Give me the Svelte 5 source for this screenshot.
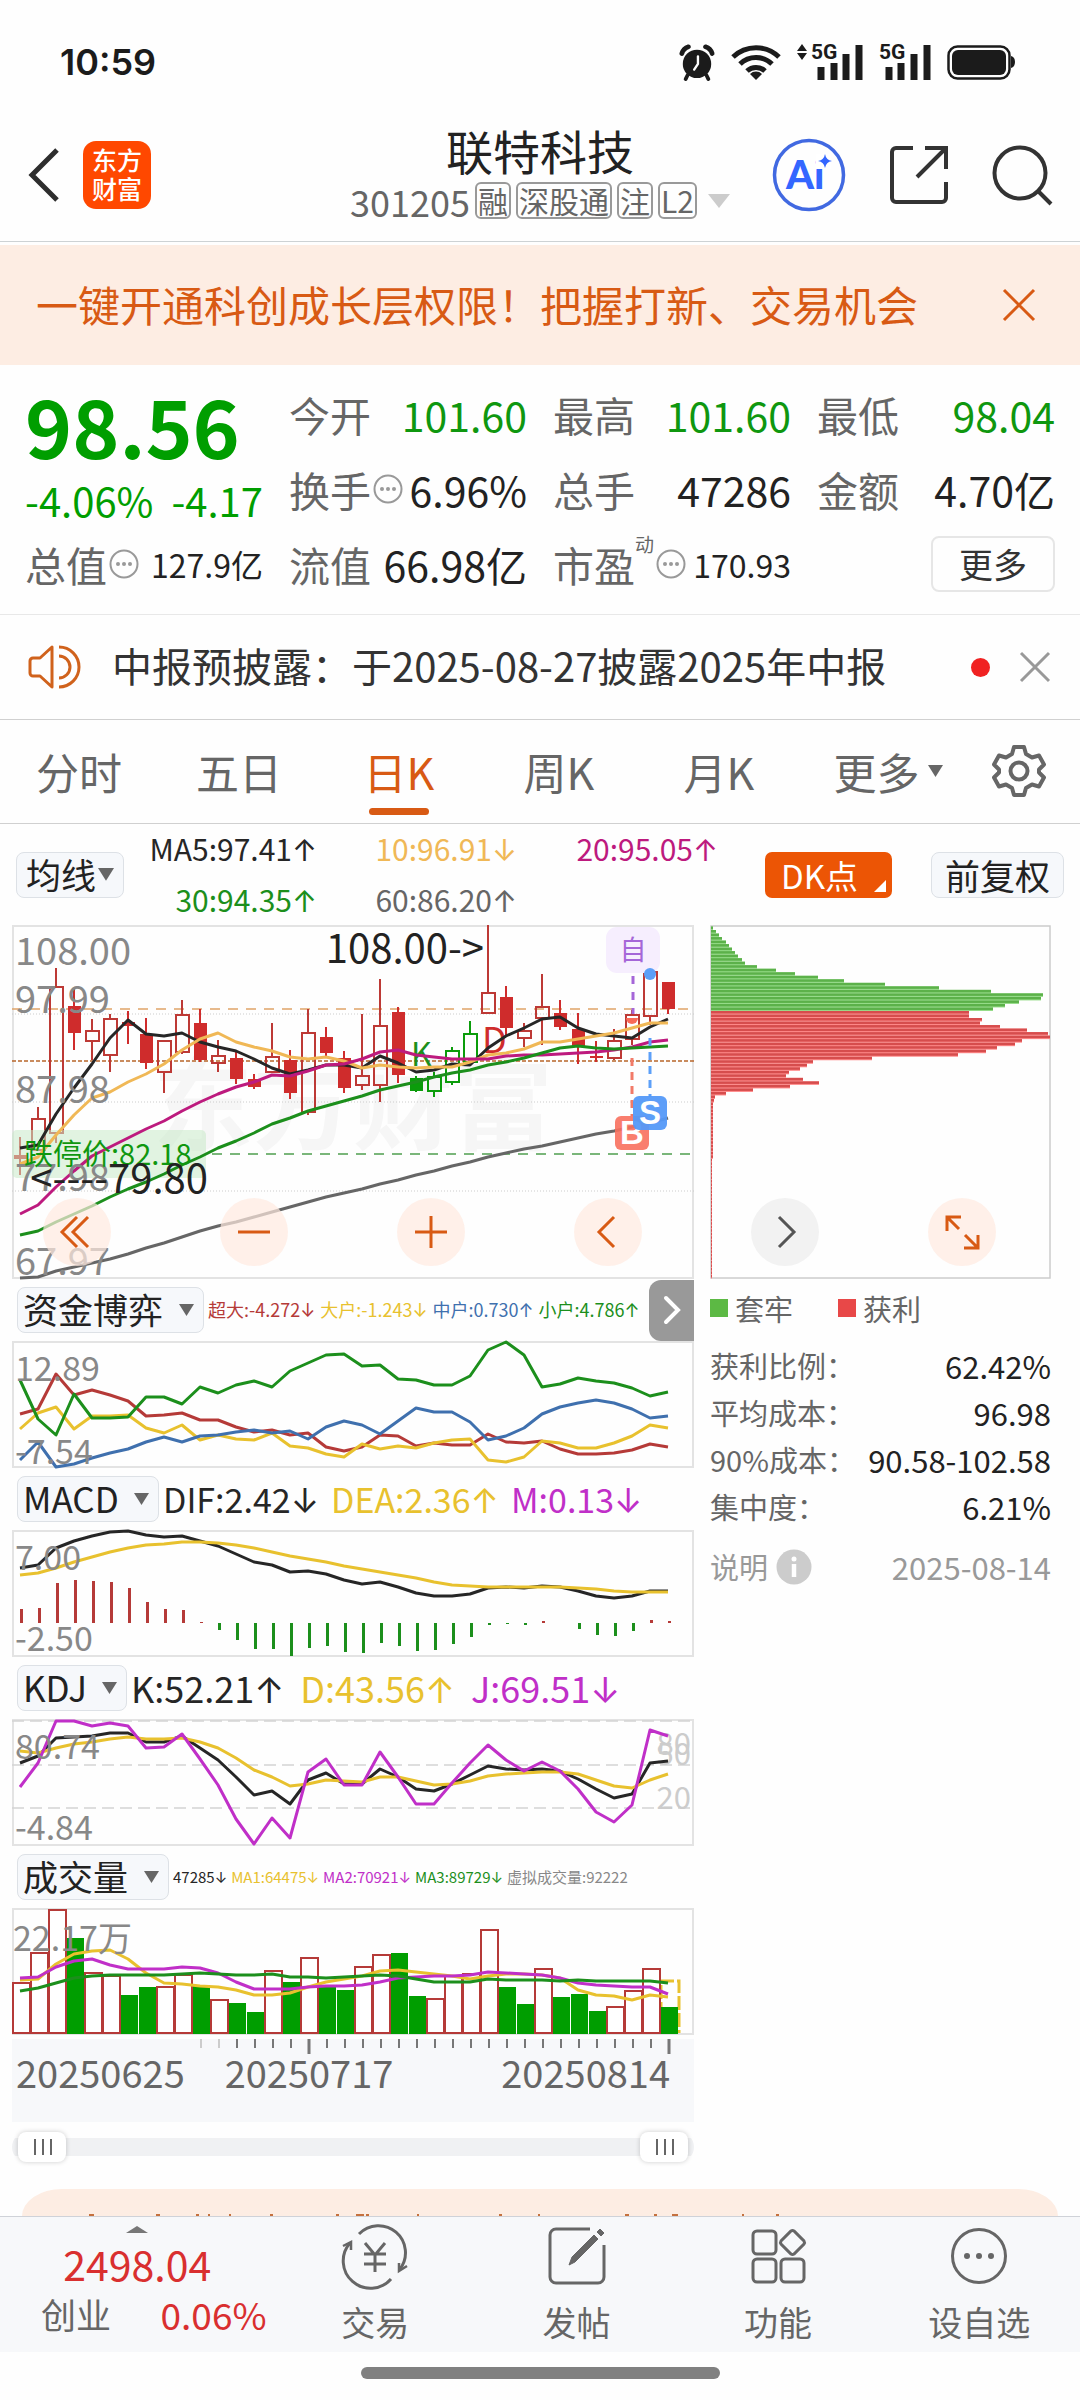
<script lang="ts">
	const STEP = 18;
	const FIRST = 8;

	const red = '#b53a38';
	const green = '#1c8f1c';
	const yellow = '#e8c12e';
	const purple = '#c02fc8';

	// [high, body top, body bottom, low, kind] — lower case is hollow, upper case is filled
	const candles: [number, number, number, number, string][] = [
		[212, 230, 234, 250, 'R'], [182, 194, 225, 225, 'r'], [43, 62, 208, 218, 'r'], [64, 81, 108, 125, 'R'],
		[94, 106, 116, 135, 'r'], [89, 94, 130, 147, 'r'], [86, 97, 101, 119, 'R'], [93, 109, 138, 144, 'R'],
		[115, 116, 147, 168, 'r'], [75, 90, 127, 129, 'r'], [84, 98, 135, 137, 'R'], [115, 131, 138, 147, 'r'],
		[126, 133, 154, 159, 'R'], [149, 154, 162, 164, 'R'], [98, 132, 147, 148, 'r'], [125, 135, 168, 174, 'R'],
		[84, 108, 187, 190, 'r'], [102, 112, 128, 132, 'R'], [126, 133, 163, 168, 'R'], [89, 151, 160, 165, 'r'],
		[54, 101, 160, 177, 'r'], [82, 87, 150, 158, 'R'], [151, 153, 166, 167, 'G'], [147, 152, 166, 172, 'g'],
		[122, 126, 157, 160, 'g'], [96, 109, 137, 140, 'g'], [0, 68, 88, 88, 'r'], [61, 72, 103, 112, 'R'],
		[98, 106, 113, 122, 'r'], [49, 82, 93, 120, 'r'], [75, 88, 102, 105, 'R'], [88, 104, 121, 139, 'R'],
		[116, 131, 133, 137, 'R'], [104, 116, 133, 135, 'r'], [85, 90, 114, 120, 'r'], [40, 47, 91, 100, 'r'],
		[57, 57, 84, 89, 'R']
	];

	const averages = [
		{ color: '#262626', data: [223, 220, 189, 163, 139, 113, 95, 109, 111, 108, 117, 122, 126, 134, 143, 149, 145, 140, 140, 143, 131, 138, 147, 145, 139, 140, 123, 111, 103, 94, 92, 103, 109, 111, 113, 102, 94] },
		{ color: '#f0b856', data: [239, 232, 210, 190, 173, 167, 157, 149, 139, 125, 114, 108, 117, 122, 126, 132, 134, 132, 136, 143, 140, 142, 143, 142, 142, 137, 130, 128, 124, 117, 117, 114, 111, 108, 103, 98, 98] },
		{ color: '#bd1a7e', data: [289, 280, 262, 246, 231, 222, 213, 204, 196, 186, 177, 169, 162, 157, 150, 151, 146, 140, 139, 134, 127, 125, 130, 132, 134, 134, 134, 131, 130, 130, 129, 128, 127, 125, 122, 117, 115] },
		{ color: green, data: [310, 306, 297, 289, 281, 272, 264, 257, 249, 240, 232, 223, 216, 208, 199, 193, 186, 181, 176, 171, 165, 161, 157, 152, 148, 145, 140, 137, 133, 128, 123, 121, 123, 124, 123, 122, 121] },
		{ color: '#666', data: [353, 352, 346, 342, 338, 334, 329, 323, 318, 312, 306, 301, 297, 292, 287, 282, 277, 272, 268, 264, 259, 255, 250, 246, 241, 237, 232, 228, 224, 221, 217, 213, 209, 206, 202, 198, 193] }
	];

	const priceTicks = [
		{ text: '108.00', y: 40 },
		{ text: '97.99', y: 88 },
		{ text: '87.98', y: 178 },
		{ text: '77.98', y: 266 },
		{ text: '67.97', y: 350 }
	];

	const fund = [
		{ color: red, data: [73, 68, 33, 54, 49, 54, 60, 75, 74, 72, 79, 79, 86, 91, 89, 94, 92, 106, 110, 106, 94, 95, 105, 102, 104, 104, 93, 101, 102, 100, 108, 113, 113, 112, 109, 103, 106] },
		{ color: yellow, data: [88, 72, 66, 88, 75, 75, 74, 87, 92, 84, 99, 94, 98, 99, 92, 105, 107, 113, 116, 103, 108, 105, 107, 102, 99, 98, 119, 121, 116, 100, 102, 107, 107, 102, 95, 84, 87] },
		{ color: '#3f70ae', data: [119, 101, 126, 123, 117, 112, 108, 101, 96, 101, 95, 94, 91, 89, 92, 90, 98, 86, 80, 84, 93, 80, 67, 71, 71, 81, 99, 95, 87, 73, 66, 62, 59, 62, 68, 77, 75] },
		{ color: green, data: [39, 78, 94, 53, 77, 77, 76, 56, 56, 63, 46, 52, 44, 40, 46, 30, 22, 14, 13, 25, 24, 38, 39, 44, 44, 35, 9, 1, 14, 46, 43, 37, 40, 42, 47, 55, 51] }
	];

	const macd = [
		{ color: '#262626', data: [38, 35, 18, 11, 6, 2, 1, 5, 7, 6, 11, 16, 24, 32, 35, 42, 41, 44, 50, 54, 52, 57, 63, 66, 66, 64, 58, 57, 58, 56, 57, 61, 66, 68, 66, 61, 61] },
		{ color: yellow, data: [45, 43, 38, 32, 27, 22, 18, 15, 14, 12, 12, 13, 15, 18, 22, 26, 29, 32, 36, 39, 42, 45, 48, 52, 55, 56, 57, 57, 57, 57, 57, 58, 59, 61, 62, 62, 62] }
	];
	const macdBars = [14, 15, 40, 43, 42, 41, 35, 21, 14, 13, 1, -7, -17, -26, -26, -33, -25, -23, -29, -30, -20, -23, -28, -27, -21, -14, -2, -1, -2, 2, 0, -6, -12, -13, -8, 3, 2];

	const kdj = [
		{ color: '#262626', data: [44, 37, 19, 18, 17, 14, 14, 23, 23, 17, 29, 41, 58, 76, 72, 85, 61, 54, 65, 65, 50, 58, 70, 72, 65, 56, 47, 50, 51, 50, 52, 60, 70, 79, 75, 44, 42] },
		{ color: yellow, data: [32, 34, 29, 25, 23, 20, 18, 20, 20, 19, 23, 29, 39, 51, 58, 67, 65, 61, 62, 63, 58, 58, 62, 66, 65, 62, 57, 55, 54, 53, 53, 55, 61, 67, 69, 61, 55] },
		{ color: purple, data: [68, 44, 2, 2, 7, 4, 7, 29, 28, 15, 40, 66, 100, 125, 99, 119, 53, 40, 66, 66, 33, 58, 85, 85, 64, 44, 26, 41, 52, 43, 52, 70, 93, 103, 86, 11, 17] }
	];

	const volumeTops = [75, 45, 2, 30, 65, 68, 87, 79, 79, 67, 78, 92, 95, 104, 63, 74, 50, 78, 82, 59, 47, 45, 88, 91, 68, 66, 22, 79, 96, 61, 89, 86, 103, 99, 83, 61, 99];
	const volumeUp = [0, 1, 2, 4, 5, 8, 9, 11, 14, 16, 19, 20, 23, 24, 25, 26, 29, 33, 34, 35];
	const volume = [
		{ color: yellow, data: [72, 71, 56, 46, 43, 42, 51, 65, 75, 76, 78, 79, 82, 87, 87, 85, 79, 74, 71, 68, 63, 62, 64, 66, 68, 71, 68, 66, 66, 67, 70, 82, 87, 88, 92, 87, 89] },
		{ color: purple, data: [70, 69, 59, 53, 51, 57, 61, 61, 61, 59, 60, 65, 74, 81, 81, 81, 79, 78, 78, 77, 74, 70, 69, 68, 68, 67, 64, 65, 66, 67, 70, 75, 77, 78, 79, 79, 86] },
		{ color: green, data: [83, 80, 75, 70, 68, 67, 67, 67, 67, 66, 65, 66, 67, 67, 66, 69, 69, 70, 69, 68, 67, 68, 71, 74, 74, 74, 71, 72, 72, 72, 73, 72, 73, 73, 73, 73, 75] }
	];

	const trapped = [2, 5, 8, 11, 15, 18, 21, 24, 27, 31, 34, 46, 65, 84, 107, 133, 174, 228, 280, 332, 330, 308, 294, 282];
	const profit = [258, 258, 271, 269, 289, 316, 337, 339, 311, 304, 286, 275, 247, 161, 102, 96, 89, 78, 75, 92, 108, 79, 42, 15, 4, 3];
	const chips = [
		...trapped.map((w) => ({ w, up: false })),
		...profit.map((w) => ({ w, up: true })),
		...Array.from({ length: 50 }, (_, i) => ({ w: i < 16 ? 2 : 1, up: true }))
	];

	const ticks = Array.from({ length: 27 }, (_, i) => i + 10);

	const tabs = ['分时', '五日', '日K', '周K', '月K'];
	let activeTab = $state('日K');
	let rangeStart = $state(0);
	let rangeEnd = $state(100);

	const tags = ['融', '深股通', '注', 'L2'];

	const maValues = [
		{ text: 'MA5:97.41', dir: '↑', color: '#262626' },
		{ text: '10:96.91', dir: '↓', color: '#f0b856' },
		{ text: '20:95.05', dir: '↑', color: '#bd1a7e' },
		{ text: '30:94.35', dir: '↑', color: green },
		{ text: '60:86.20', dir: '↑', color: '#666' }
	];

	const fundValues = [
		{ text: '超大:-4.272', dir: '↓', color: red },
		{ text: '大户:-1.243', dir: '↓', color: yellow },
		{ text: '中户:0.730', dir: '↑', color: '#3f70ae' },
		{ text: '小户:4.786', dir: '↑', color: green }
	];
	const macdValues = [
		{ text: 'DIF:2.42', dir: '↓', color: '#262626' },
		{ text: 'DEA:2.36', dir: '↑', color: yellow },
		{ text: 'M:0.13', dir: '↓', color: purple }
	];
	const kdjValues = [
		{ text: 'K:52.21', dir: '↑', color: '#262626' },
		{ text: 'D:43.56', dir: '↑', color: yellow },
		{ text: 'J:69.51', dir: '↓', color: purple }
	];
	const volumeValues = [
		{ text: '47285', dir: '↓', color: '#262626' },
		{ text: 'MA1:64475', dir: '↓', color: yellow },
		{ text: 'MA2:70921', dir: '↓', color: purple },
		{ text: 'MA3:89729', dir: '↓', color: green },
		{ text: '虚拟成交量:92222', dir: '', color: '#888' }
	];

	const costRows = [
		{ label: '获利比例：', value: '62.42%' },
		{ label: '平均成本：', value: '96.98' },
		{ label: '90%成本：', value: '90.58-102.58' },
		{ label: '集中度：', value: '6.21%' }
	];

	function toPoints(data: number[]) {
		return data.map((y, i) => `${FIRST + STEP * i},${y}`).join(' ');
	}
</script>

{#snippet more()}
	<svg class="info" viewBox="0 0 30 30" aria-hidden="true">
		<circle cx="15" cy="15" r="13.5" fill="none" stroke="#999" stroke-width="2" />
		<g fill="#999"><circle cx="9" cy="15" r="2" /><circle cx="15" cy="15" r="2" /><circle cx="21" cy="15" r="2" /></g>
	</svg>
{/snippet}

{#snippet caret()}
	<svg class="caret" viewBox="0 0 15 12" aria-hidden="true"><path d="M0 0h15L7.500 12z" fill="#666" /></svg>
{/snippet}

{#snippet picker(name)}
	<span class="picker">
		<select aria-label={name}><option>{name}</option></select>
		{@render caret()}
	</span>
{/snippet}

{#snippet values(list, size)}
	<div class="values {size}">
		{#each list as v}
			<span style:color={v.color}>{v.text}<i>{v.dir}</i></span>
		{/each}
	</div>
{/snippet}

{#snippet lines(list)}
	{#each list as line}
		<polyline points={toPoints(line.data)} fill="none" stroke={line.color} stroke-width="3" stroke-linejoin="round" />
	{/each}
{/snippet}

<div class="page">
	<div class="status">
		<span class="time">10:59</span>
		<div class="status-icons">
			<svg width="36" height="38" viewBox="0 0 38 38">
				<circle cx="19" cy="21" r="15" fill="#1b1b1b" />
				<path d="M3 10a11 11 0 0 1 7-7M35 10a11 11 0 0 0-7-7" fill="none" stroke="#1b1b1b" stroke-width="5" stroke-linecap="round" />
				<path d="M9 33l-2 4M29 33l2 4" stroke="#1b1b1b" stroke-width="4" stroke-linecap="round" />
				<path d="M20 13v8l-4 6" fill="none" stroke="#fff" stroke-width="2.500" stroke-linecap="round" />
			</svg>
			<svg width="50" height="38" viewBox="0 0 50 38">
				<path d="M2 14a33 33 0 0 1 46 0M9 21a23 23 0 0 1 32 0M16 28a13 13 0 0 1 18 0" fill="none" stroke="#1b1b1b" stroke-width="5" />
				<path d="M25 37l-6-6a8.500 8.500 0 0 1 12 0z" fill="#1b1b1b" />
			</svg>
			<svg width="66" height="38" viewBox="0 0 66 38">
				<path d="M0 8l5-7 5 7zM0 10l5 7 5-7z" fill="#1b1b1b" />
				<text x="14" y="16" class="net">5G</text>
				<path d="M24 37V24M37 37V20M49 37V11M62 37V2" stroke="#1b1b1b" stroke-width="7" />
			</svg>
			<svg width="52" height="38" viewBox="0 0 52 38">
				<text x="0" y="16" class="net">5G</text>
				<path d="M10 37V24M22 37V20M35 37V11M48 37V2" stroke="#1b1b1b" stroke-width="7" />
			</svg>
			<svg width="68" height="38" viewBox="0 0 68 38">
				<rect x="1.500" y="3.500" width="61" height="32" rx="9" fill="none" stroke="#1b1b1b" stroke-width="2.500" />
				<rect x="5" y="7" width="54" height="25" rx="6" fill="#1b1b1b" />
				<path d="M64 13q4 1 4 6t-4 6z" fill="#1b1b1b" />
			</svg>
		</div>
	</div>

	<header>
		<div class="side">
			<button aria-label="返回">
				<svg width="32" height="56" viewBox="0 0 32 56"><path d="M29 3L4 28l25 25" fill="none" stroke="#2e2e2e" stroke-width="5" /></svg>
			</button>
			<a href="#home" class="logo">东方<br />财富</a>
		</div>
		<div class="name">
			<h1>联特科技</h1>
			<div class="code">
				<span>301205</span>
				{#each tags as tag}
					<span class="tag">{tag}</span>
				{/each}
				<svg width="22" height="14" viewBox="0 0 22 14"><path d="M0 0h22L11 14z" fill="#ccc" /></svg>
			</div>
		</div>
		<div class="side actions">
			<button aria-label="Ai">
				<svg width="74" height="74" viewBox="0 0 74 74">
					<circle cx="37" cy="37" r="34.500" fill="none" stroke="#4169e1" stroke-width="3.500" />
					<text x="14" y="51" class="ai">Ai</text>
					<path d="M44 16h15v15H44z" fill="#fff" />
					<path d="M53 16q1 6 7 7q-6 1-7 7q-1-6-7-7q6-1 7-7z" fill="#3366ff" />
				</svg>
			</button>
			<button aria-label="分享">
				<svg width="60" height="60" viewBox="0 0 60 60"><path d="M24 3H7a4 4 0 0 0-4 4v46a4 4 0 0 0 4 4h46a4 4 0 0 0 4-4V37M36 3h21v21M57 3L28 32" fill="none" stroke="#333" stroke-width="4" /></svg>
			</button>
			<button aria-label="搜索">
				<svg width="60" height="60" viewBox="0 0 60 60"><circle cx="28" cy="28" r="25.500" fill="none" stroke="#333" stroke-width="4" /><path d="M46 46l13 13" stroke="#333" stroke-width="4" /></svg>
			</button>
		</div>
	</header>

	<div class="banner">
		<a href="#open">一键开通科创成长层权限！把握打新、交易机会</a>
		<button aria-label="关闭">
			<svg width="34" height="34" viewBox="0 0 34 34"><path d="M2 2l30 30M32 2L2 32" stroke="#d85a14" stroke-width="3" /></svg>
		</button>
	</div>

	<section class="quote">
		<div class="price">
			<strong>98.56</strong>
			<div class="change"><span>-4.06%</span><span>-4.17</span></div>
		</div>
		<div class="stat"><span>今开</span><b class="down">101.60</b></div>
		<div class="stat"><span>最高</span><b class="down">101.60</b></div>
		<div class="stat"><span>最低</span><b class="down">98.04</b></div>
		<div class="stat"><span>换手{@render more()}</span><b>6.96%</b></div>
		<div class="stat"><span>总手</span><b>47286</b></div>
		<div class="stat"><span>金额</span><b>4.70亿</b></div>
		<div class="stat"><span>总值{@render more()}</span><b class="small">127.9亿</b></div>
		<div class="stat"><span>流值</span><b>66.98亿</b></div>
		<div class="stat"><span>市盈<sup>动</sup>{@render more()}</span><b class="small">170.93</b></div>
		<div class="stat"><button class="more">更多</button></div>
	</section>

	<div class="notice">
		<svg width="54" height="46" viewBox="0 0 54 46" fill="none" stroke="#d0621c" stroke-width="3">
			<path d="M24 3v40L12 32H5a3 3 0 0 1-3-3V17a3 3 0 0 1 3-3h7z" stroke-linejoin="round" />
			<path d="M31 12a11 11 0 0 1 0 22M31 3a20 20 0 0 1 0 40" />
		</svg>
		<a href="#notice">中报预披露：于2025-08-27披露2025年中报</a>
		<span class="dot"></span>
		<button aria-label="关闭">
			<svg width="30" height="30" viewBox="0 0 30 30"><path d="M1 1l28 28M29 1L1 29" stroke="#999" stroke-width="3" /></svg>
		</button>
	</div>

	<nav class="tabs">
		{#each tabs as tab}
			<button class:active={activeTab === tab} onclick={() => (activeTab = tab)}>{tab}</button>
		{/each}
		<button class="others">更多{@render caret()}</button>
		<button aria-label="设置">
			<svg width="54" height="54" viewBox="0 0 54 54" fill="none" stroke="#666" stroke-width="4" stroke-linejoin="round">
				<path d="M22 3h10l2 7 6 3.500 7-2 5 9-5 5v3l5 5-5 9-7-2-6 3.500-2 7H22l-2-7-6-3.500-7 2-5-9 5-5v-3l-5-5 5-9 7 2 6-3.500z" />
				<circle cx="27" cy="27" r="8.500" />
			</svg>
		</button>
	</nav>

	<div class="toolbar">
		<span class="picker tight">
			<select aria-label="均线"><option>均线</option></select>
			{@render caret()}
		</span>
		<div class="ma">
			{#each maValues as v}
				<span style:color={v.color}>{v.text}<i>{v.dir}</i></span>
			{/each}
		</div>
		<button class="dk">DK点</button>
		<button class="adjust">前复权</button>
	</div>

	<div class="board">
		<div class="charts">
			<div class="chart">
				<svg viewBox="0 0 682 354">
					<text x="141" y="217" class="watermark">东方财富</text>
					<rect x="1" y="1" width="680" height="352" class="frame" />
					<path d="M0 89h682M0 177h682M0 266h682" stroke="#ccc" stroke-dasharray="1 2" />
					<path d="M0 84h682" stroke="#dfa468" stroke-width="1.500" stroke-dasharray="10 8" />
					<path d="M0 136h682" stroke="#b8662a" stroke-width="1.500" stroke-dasharray="4 2" />
					<path d="M200 229h482" stroke="#4f9f4f" stroke-width="1.500" stroke-dasharray="10 8" />
					{#each candles as [high, top, bottom, low, kind], i}
						{@const x = FIRST + STEP * i}
						{@const filled = kind === kind.toUpperCase()}
						{@const color = kind.toLowerCase() === 'g' ? '#0b9c0b' : filled ? '#cf2c2c' : '#bd3935'}
						<path d="M{x} {high}V{top}M{x} {bottom}V{low}" stroke={color} stroke-width="2" />
						<rect x={x - 6} y={top} width="13" height={bottom - top} fill={filled ? color : 'none'} stroke={color} stroke-width={filled ? 0 : 2} />
					{/each}
					<text x="399" y="141" class="mark-k">K</text>
					<text x="470" y="128" class="mark-d">D</text>
					<rect x="0" y="205" width="194" height="48" rx="5" fill="#c8eac8" fill-opacity=".55" />
					{@render lines(averages)}
					{#each priceTicks as t}
						<text x="3" y={t.y} class="axis big">{t.text}</text>
					{/each}
					<text x="12" y="240" class="limit">跌停价:82.18</text>
					<text x="196" y="268" class="peak" text-anchor="end">&lt;----79.80</text>
					<text x="472" y="38" class="peak" text-anchor="end">108.00-&gt;</text>
					<rect x="594" y="2" width="54" height="46" rx="11" fill="#f6eefe" />
					<text x="621" y="35" class="self" text-anchor="middle">自</text>
					<path d="M621 51v38" stroke="#a566d8" stroke-width="3" stroke-dasharray="8 8" />
					<path d="M614 93h12a6 6 0 0 1-12 0z" fill="#f86a58" />
					<circle cx="638" cy="49" r="6" fill="#5c9ff8" />
					<path d="M620 133v58" stroke="#f27a68" stroke-width="3" stroke-dasharray="8 6" />
					<path d="M638 113v59" stroke="#5c9ff8" stroke-width="3" stroke-dasharray="8 6" />
					<rect x="603" y="191" width="34" height="34" rx="6" fill="#f8705e" fill-opacity=".9" />
					<text x="620" y="219" class="flag" text-anchor="middle">B</text>
					<rect x="621" y="171" width="34" height="34" rx="6" fill="#5499f8" fill-opacity=".95" />
					<text x="638" y="199" class="flag" text-anchor="middle">S</text>
				</svg>
				<div class="controls">
					<button aria-label="最早"><svg viewBox="0 0 68 68"><path d="M34 19L19 34l15 15M45 19L30 34l15 15" /></svg></button>
					<button aria-label="缩小"><svg viewBox="0 0 68 68"><path d="M18 34h32" /></svg></button>
					<button aria-label="放大"><svg viewBox="0 0 68 68"><path d="M18 34h32M34 18v32" /></svg></button>
					<button aria-label="向左"><svg viewBox="0 0 68 68"><path d="M40 19L25 34l15 15" /></svg></button>
				</div>
			</div>

			<div class="head">
				{@render picker('资金博弈')}
				{@render values(fundValues, 'xs')}
				<button class="expand" aria-label="展开"><svg width="18" height="28" viewBox="0 0 18 28"><path d="M3 2l12 12L3 26" fill="none" stroke="#fff" stroke-width="4" stroke-linecap="round" /></svg></button>
			</div>
			<svg viewBox="0 0 682 127">
				<rect x="1" y="1" width="680" height="125" class="frame" />
				{@render lines(fund)}
				<text x="3" y="40" class="axis">12.89</text>
				<text x="3" y="123" class="axis">-7.54</text>
			</svg>

			<div class="head">
				{@render picker('MACD')}
				{@render values(macdValues, 'md')}
			</div>
			<svg viewBox="0 0 682 127">
				<rect x="1" y="1" width="680" height="125" class="frame" />
				{#each macdBars as h, i}
					<rect x={FIRST + STEP * i} y={h > 0 ? 93 - h : 93} width="3" height={Math.abs(h)} fill={h > 0 ? red : green} />
				{/each}
				{@render lines(macd)}
				<text x="3" y="40" class="axis">7.00</text>
				<text x="3" y="121" class="axis">-2.50</text>
			</svg>

			<div class="head">
				{@render picker('KDJ')}
				{@render values(kdjValues, 'lg')}
			</div>
			<svg viewBox="0 0 682 127">
				<rect x="1" y="1" width="680" height="125" class="frame" />
				<path d="M0 2h682M0 46h682M0 89h682" stroke="#d4d4d4" stroke-width="1.500" stroke-dasharray="12 6" />
				<text x="679" y="36" class="level" text-anchor="end">80</text>
				<text x="679" y="46" class="level" text-anchor="end">50</text>
				<text x="679" y="90" class="level" text-anchor="end">20</text>
				{@render lines(kdj)}
				<text x="3" y="40" class="axis">80.74</text>
				<text x="3" y="121" class="axis">-4.84</text>
			</svg>

			<div class="head">
				{@render picker('成交量')}
				{@render values(volumeValues, 'xxs')}
			</div>
			<svg viewBox="0 0 682 127">
				<rect x="1" y="1" width="680" height="125" class="frame" />
				<path d="M649 125V73h18v52" fill="none" stroke={yellow} stroke-width="3" stroke-dasharray="14 3" />
				{#each volumeTops as top, i}
					{#if volumeUp.includes(i)}
						<rect x={STEP * i + 1} y={top} width="17" height={125 - top} fill="#fff" stroke={red} stroke-width="2" />
					{:else}
						<rect x={STEP * i + 1} y={top} width="17" height={126 - top} fill="#009e00" />
					{/if}
				{/each}
				{@render lines(volume)}
				<text x="1" y="43" class="axis">22.17万</text>
			</svg>

			<svg class="dates" viewBox="0 0 682 83">
				{#each ticks as t}
					<path d="M{FIRST + STEP * t + 1} 0v{t === 16 || t === 36 ? 15 : 9}" stroke={t < 12 ? '#ccc' : '#777'} stroke-width={t === 16 || t === 36 ? 3 : 2} />
				{/each}
				<text x="4" y="49">20250625</text>
				<text x="297" y="49" text-anchor="middle">20250717</text>
				<text x="658" y="49" text-anchor="end">20250814</text>
			</svg>

			<div class="range">
				<input type="range" aria-label="起始日期" bind:value={rangeStart} />
				<input type="range" aria-label="结束日期" bind:value={rangeEnd} />
			</div>
		</div>

		<aside>
			<div class="chart">
				<svg viewBox="0 0 341 354">
					<rect x="1" y="1" width="339" height="352" fill="none" stroke="#ccc" stroke-width="1.500" />
					{#each chips as chip, i}
						<rect x="1" y={1.5 + 3.52 * i} width={chip.w} height="3.520" fill={chip.up ? '#ff8a8a' : '#95dc88'} />
						<rect x="1" y={1.5 + 3.52 * i} width={chip.w} height="2.500" fill={chip.up ? '#d64d4d' : '#5cb14a'} />
					{/each}
				</svg>
				<div class="controls chip-controls">
					<button class="gray" aria-label="向右"><svg viewBox="0 0 68 68"><path d="M28 19l15 15-15 15" /></svg></button>
					<button aria-label="全屏"><svg viewBox="0 0 68 68"><path d="M19 33V19h14M19 19l12 12M50 37v13H36M49 49L37 37" stroke-width="4" /></svg></button>
				</div>
			</div>
			<div class="legend">
				<span><i class="trapped"></i>套牢</span>
				<span><i class="profit"></i>获利</span>
			</div>
			{#each costRows as row}
				<div class="cost"><span>{row.label}</span><b>{row.value}</b></div>
			{/each}
			<div class="explain">
				<a href="#explain">说明
					<svg width="36" height="36" viewBox="0 0 36 36"><circle cx="18" cy="18" r="17.500" fill="#ccc" /><circle cx="18" cy="10" r="2.500" fill="#fff" /><path d="M18 15v13" stroke="#fff" stroke-width="4.500" /></svg>
				</a>
				<time>2025-08-14</time>
			</div>
		</aside>
	</div>

	<div class="card">
		<svg viewBox="0 0 720 2" aria-hidden="true"><path d="M0 1h5M67 1h4M107 1h3M119 1h2M140 1h2M181 1h3M247 1h3M267 1h8M277 1h3M328 1h2M410 1h3M449 1h2M536 1h4M565 1h3M583 1h6M653 1h2M687 1h3" stroke="#c5713e" stroke-width="2" /></svg>
	</div>

	<footer>
		<a href="#index" class="index">
			<svg width="22" height="7" viewBox="0 0 22 7"><path d="M0 7h22L11 0z" fill="#777" /></svg>
			<b>2498.04</b>
			<span class="index-row"><span>创业</span><em>0.06%</em></span>
		</a>
		<a href="#trade">
			<svg width="66" height="60" viewBox="0 0 66 60" fill="none" stroke="#666" stroke-width="3">
				<path d="M17 8a27 27 0 0 1 41 35M49 53A27 27 0 0 1 8 17" />
				<path d="M1 20l8-4v8M65 40l-8 5v-8" stroke-width="2.500" />
				<path d="M23 17l10 12 10-12M22 28h22M22 38h22M33 28v18" />
			</svg>
			交易
		</a>
		<a href="#post">
			<svg width="60" height="60" viewBox="0 0 60 60" fill="none" stroke="#666" stroke-width="3">
				<path d="M43 3H9a6 6 0 0 0-6 6v42a6 6 0 0 0 6 6h42a6 6 0 0 0 6-6V19" />
				<path d="M22 39l3-8L47 9l4 4-23 23zM50 6l3-3 4 4-3 3z" fill="#666" stroke-width="1" />
			</svg>
			发帖
		</a>
		<a href="#features">
			<svg width="58" height="60" viewBox="0 0 58 60" fill="none" stroke="#666" stroke-width="3">
				<rect x="4" y="5" width="23" height="23" rx="4" />
				<rect x="4" y="33" width="23" height="23" rx="4" />
				<rect x="32" y="33" width="23" height="23" rx="4" />
				<path d="M42 5q1.500-1 3 0l10 10q1 1.500 0 3L45 28q-1.500 1-3 0L32 18q-1-1.500 0-3z" />
			</svg>
			功能
		</a>
		<a href="#watchlist">
			<svg width="60" height="60" viewBox="0 0 60 60">
				<circle cx="30" cy="30" r="26.500" fill="none" stroke="#666" stroke-width="3" />
				<g fill="#666"><circle cx="18" cy="30" r="3" /><circle cx="30" cy="30" r="3" /><circle cx="42" cy="30" r="3" /></g>
			</svg>
			设自选
		</a>
	</footer>
	<div class="home"></div>
</div>

<style>
	:global(body) {
		background: #fefefe;
	}

	.page {
		font-family: 'Noto Sans CJK SC', 'Noto Sans', sans-serif;
		color: #333;
		white-space: nowrap;
		overflow: hidden;
	}

	svg {
		display: block;
		flex-shrink: 0;
		overflow: visible;
	}

	button,
	select {
		font: inherit;
		color: inherit;
		background: none;
		border: 0;
		padding: 0;
	}

	a {
		color: inherit;
		text-decoration: none;
	}

	b,
	i,
	em {
		font-weight: 400;
		font-style: normal;
	}

	/* Status bar */
	.status {
		display: flex;
		justify-content: space-between;
		align-items: center;
		height: 124px;
		padding: 0 65px 0 60px;
		box-sizing: border-box;
	}

	.time {
		font-family: Inter, sans-serif;
		font-size: 36px;
		font-weight: 600;
		color: #1b1b1b;
	}

	.status-icons {
		display: flex;
		gap: 16px;
	}

	.net {
		font: 700 21px Roboto, sans-serif;
		fill: #1b1b1b;
	}

	/* Header */
	header {
		display: grid;
		grid-template-columns: 1fr auto 1fr;
		align-items: center;
		height: 117px;
		padding: 0 28px;
		border-bottom: 1px solid #cdd2d4;
	}

	.side {
		display: flex;
		align-items: center;
		gap: 23px;
		padding-bottom: 16px;
	}

	.actions {
		justify-content: flex-end;
		gap: 43px;
	}

	.logo {
		width: 68px;
		padding: 4px 0 6px;
		border-radius: 13px;
		background: #ff4800;
		color: #fff;
		font-size: 25px;
		font-weight: 500;
		line-height: 29px;
		text-align: center;
	}

	.ai {
		font: 900 40px Lato, sans-serif;
		fill: #3366ff;
	}

	.name {
		padding-bottom: 14px;
	}

	h1 {
		margin: 0;
		font-size: 47px;
		font-weight: 400;
		line-height: 50px;
		text-align: center;
		color: #222;
	}

	.code {
		display: flex;
		align-items: center;
		gap: 5px;
		font-size: 36px;
		line-height: 52px;
		color: #666;
	}

	.tag {
		padding: 0 1px;
		border: 2px solid #999;
		border-radius: 6px;
		font-size: 30px;
		line-height: 33px;
	}

	.code svg {
		margin-left: 6px;
	}

	/* Banner */
	.banner {
		display: flex;
		justify-content: space-between;
		align-items: center;
		height: 120px;
		margin-top: 3px;
		padding: 0 44px 0 36px;
		background: #fdede3;
		color: #d85a14;
		font-size: 42px;
	}

	.banner a,
	.notice a {
		padding-bottom: 4px;
	}

	/* Quote */
	.quote {
		display: grid;
		grid-template-columns: repeat(4, minmax(0, 1fr));
		grid-auto-rows: 75px;
		column-gap: 26px;
		padding: 11px 25px 13px;
		border-bottom: 1px solid #e8e8e8;
	}

	.price {
		grid-row: span 2;
		color: #009e00;
	}

	.price strong {
		display: block;
		font-size: 80px;
		font-weight: 700;
		line-height: 96px;
	}

	.change {
		display: flex;
		justify-content: space-between;
		font-size: 40px;
		line-height: 56px;
	}

	.stat {
		display: flex;
		justify-content: space-between;
		align-items: center;
		font-size: 41px;
	}

	.stat span {
		display: flex;
		align-items: center;
		color: #666;
	}

	.stat b {
		color: #222;
	}

	.stat b.down {
		color: #0f970f;
	}

	.stat b.small {
		font-size: 32px;
	}

	.stat sup {
		align-self: flex-start;
		font-size: 19px;
		line-height: 20px;
	}

	.info {
		width: 30px;
		margin-left: 2px;
	}

	.more {
		margin-left: auto;
		width: 124px;
		border: 2px solid #e6e6e6;
		border-radius: 8px;
		font-size: 34px;
		line-height: 52px;
	}

	/* Notice */
	.notice {
		display: flex;
		align-items: center;
		height: 104px;
		padding: 0 30px 0 28px;
		border-bottom: 1px solid #d0d0d0;
		font-size: 40px;
	}

	.notice a {
		margin-left: 30px;
	}

	.dot {
		width: 19px;
		height: 19px;
		margin: 0 30px 0 auto;
		border-radius: 50%;
		background: #f02222;
	}

	/* Tabs */
	.tabs {
		display: grid;
		grid-template-columns: repeat(6, 4fr) 3fr;
		height: 103px;
		border-bottom: 1px solid #d0d0d0;
		color: #666;
		font-size: 43px;
	}

	.tabs button {
		position: relative;
		display: flex;
		justify-content: center;
		align-items: center;
		gap: 8px;
		padding: 0 2px 2px 0;
	}

	.tabs .others {
		padding-left: 18px;
	}

	.tabs .active {
		color: #d85a14;
	}

	.tabs .active::after {
		content: '';
		position: absolute;
		bottom: 8px;
		width: 60px;
		height: 7px;
		border-radius: 4px;
		background: #d85a14;
	}

	.caret {
		width: 15px;
	}

	/* Toolbar */
	.toolbar {
		display: flex;
		align-items: center;
		height: 101px;
		padding: 0 16px;
	}

	.picker {
		position: relative;
		display: flex;
		align-items: center;
		border: 1px solid #dde1e6;
		border-radius: 8px;
		background: #f6f8fb;
	}

	.picker select {
		appearance: none;
		height: 44px;
		padding: 0 39px 2px 5px;
		font-size: 35px;
		line-height: 42px;
		color: #222;
	}

	.picker .caret {
		position: absolute;
		right: 9px;
		pointer-events: none;
	}

	.picker.tight select {
		padding: 0 26px 2px 9px;
	}

	.tight .caret {
		width: 16px;
	}

	.ma {
		display: grid;
		grid-template-columns: 193px 200px 201px;
		font-size: 30px;
		line-height: 49px;
		text-align: right;
	}

	.ma i,
	.values i {
		font-family: Inter, sans-serif;
	}

	.dk {
		position: relative;
		margin-left: auto;
		padding: 0 34px 0 16px;
		border-radius: 7px;
		background: #ec5505;
		color: #fff;
		font-size: 33px;
		line-height: 46px;
	}

	.dk::after {
		content: '';
		position: absolute;
		right: 6px;
		bottom: 6px;
		border: 6px solid #fff;
		border-top-color: transparent;
		border-left-color: transparent;
	}

	.adjust {
		margin-left: 39px;
		padding: 0 13px;
		border: 1px solid #dde1e6;
		border-radius: 8px;
		background: #f6f8fb;
		color: #222;
		font-size: 35px;
		line-height: 44px;
	}

	/* Charts */
	.board {
		display: grid;
		grid-template-columns: minmax(0, 2fr) minmax(0, 1fr);
		column-gap: 16px;
		padding: 0 29px 0 12px;
	}

	.charts > svg,
	.chart > svg {
		width: 100%;
		height: auto;
	}

	.chart {
		position: relative;
	}

	.frame {
		fill: none;
		stroke: #e3e3e3;
		stroke-width: 2;
	}

	.watermark {
		font-size: 100px;
		font-weight: 700;
		fill: #f6f6f6;
	}

	.axis {
		font-size: 34px;
		fill: #888;
	}

	.axis.big {
		font-size: 38px;
	}

	.peak {
		font-size: 40px;
		fill: #222;
	}

	.limit {
		font-size: 29px;
		fill: #0f970f;
	}

	.level {
		font-size: 31px;
		fill: #ccc;
	}

	.mark-k {
		font-size: 32px;
		fill: #1c8f1c;
	}

	.mark-d {
		font-size: 36px;
		fill: #cf2c2c;
	}

	.self {
		font-size: 27px;
		fill: #a566d8;
	}

	.flag {
		font: 700 33px 'Liberation Sans', sans-serif;
		fill: #fff;
	}

	.controls {
		position: absolute;
		left: 0;
		right: 0;
		bottom: 13px;
		display: flex;
		justify-content: space-between;
		padding: 0 52px 0 31px;
	}

	.controls button {
		width: 68px;
		border-radius: 50%;
		background: rgba(255, 234, 223, 0.7);
		color: #d85a14;
	}

	.controls path {
		fill: none;
		stroke: currentColor;
		stroke-width: 3;
	}

	.controls .gray {
		background: #f2f2f2;
		color: #555;
	}

	.chip-controls {
		justify-content: flex-start;
		gap: 109px;
		padding: 0 0 0 41px;
	}

	.head {
		display: flex;
		align-items: center;
		height: 62px;
		padding-left: 5px;
	}

	.values {
		display: flex;
		margin-left: 4px;
		padding-bottom: 2px;
	}

	.xxs {
		gap: 4px;
		font-size: 15px;
	}

	.xs {
		gap: 5px;
		font-size: 18px;
	}

	.md {
		gap: 12px;
		font-size: 34px;
	}

	.lg {
		gap: 16px;
		font-size: 36px;
	}

	.expand {
		display: flex;
		justify-content: center;
		align-items: center;
		width: 45px;
		height: 61px;
		margin-left: auto;
		border-radius: 12px 0 0 12px;
		background: #999;
	}

	.dates {
		margin-top: 4px;
		background: #f7f8fa;
		font-size: 38px;
		fill: #666;
	}

	.range {
		position: relative;
		height: 30px;
		margin-top: 10px;
		border-radius: 15px;
		background: linear-gradient(#f0f1f3, #f0f1f3) center / 100% 18px no-repeat;
	}

	.range input {
		position: absolute;
		left: 6px;
		width: calc(100% - 12px);
		height: 30px;
		margin: 0;
		appearance: none;
		background: none;
		pointer-events: none;
	}

	.range input::-webkit-slider-thumb {
		appearance: none;
		width: 48px;
		height: 30px;
		border-radius: 8px;
		background: repeating-linear-gradient(90deg, #666 0 2px, transparent 2px 8px) 16px center / 18px 16px no-repeat #fff;
		box-shadow: 0 0 5px rgba(0, 0, 0, 0.2);
		pointer-events: auto;
	}

	/* Chip distribution */
	.legend {
		display: flex;
		gap: 45px;
		height: 58px;
		font-size: 29px;
		color: #666;
	}

	.legend span {
		display: flex;
		align-items: center;
		gap: 7px;
	}

	.legend i {
		width: 18px;
		height: 18px;
	}

	.trapped {
		background: #5cb944;
	}

	.profit {
		background: #e84848;
	}

	.legend + .cost {
		margin-top: 5px;
	}

	.cost,
	.explain {
		display: flex;
		justify-content: space-between;
		font-size: 29px;
		line-height: 47px;
		color: #666;
	}

	.cost b {
		font-size: 31px;
		color: #222;
	}

	.explain {
		margin-top: 13px;
		color: #999;
	}

	.explain a {
		display: flex;
		align-items: center;
		gap: 8px;
	}

	.explain time {
		font-size: 31px;
	}

	/* Bottom */
	.card {
		margin: 27px 22px 0;
		padding: 25px 0 0 67px;
		border-radius: 40px 40px 0 0 / 27px 27px 0 0;
		background: #fdede3;
	}

	.card svg {
		width: 720px;
	}

	footer {
		display: grid;
		grid-template-columns: 274fr repeat(4, 201fr);
		height: 135px;
		border-top: 1px solid #cfd2d8;
		background: #f7f8fa;
		color: #666;
		font-size: 34px;
	}

	footer a {
		display: flex;
		flex-direction: column;
		align-items: center;
		padding-top: 9px;
		line-height: 72px;
	}

	.index b {
		font-size: 41px;
		line-height: 60px;
		color: #d92f2f;
	}

	.index-row {
		display: flex;
		align-self: stretch;
		justify-content: space-between;
		padding: 0 8px 0 41px;
		font-size: 35px;
		line-height: 42px;
	}

	.index-row em {
		font-size: 37px;
		color: #d92f2f;
	}

	.home {
		width: 359px;
		height: 12px;
		margin: 15px auto 21px;
		border-radius: 6px;
		background: #808080;
	}
</style>
